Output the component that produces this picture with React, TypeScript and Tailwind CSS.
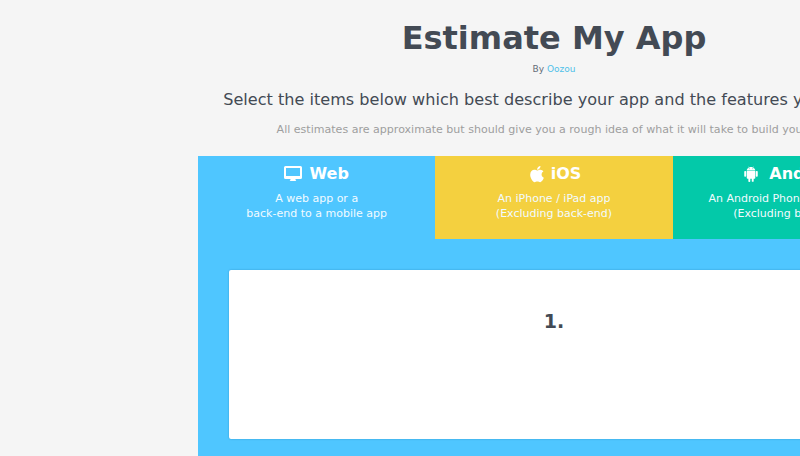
import React from 'react';
import { AiFillAndroid, AiFillApple } from 'react-icons/ai';

const DesktopIcon = () => (
  <svg width="18" height="16" viewBox="0 0 18 16" fill="currentColor">
    <path
      fillRule="evenodd"
      d="M1.5 0h15A1.5 1.5 0 0 1 18 1.500v10a1.500 1.500 0 0 1-1.500 1.500H11.500c0 1 .3 1.400.8 2H5.700c.5-.6.8-1 .8-2H1.500A1.500 1.500 0 0 1 0 11.500v-10A1.500 1.500 0 0 1 1.500 0ZM2 2v8h14V2Z"
    />
  </svg>
);

const tabs = [
  { name: 'Web', icon: <DesktopIcon />, gap: 'gap-[7px]', bg: 'bg-[#4fc6ff]', lines: ['A web app or a', 'back-end to a mobile app'] },
  { name: 'iOS', icon: <AiFillApple size={20} />, gap: 'gap-[4px]', bg: 'bg-[#f4d03f]', lines: ['An iPhone / iPad app', '(Excluding back-end)'] },
  { name: 'Android', icon: <AiFillAndroid size={18} />, gap: 'gap-[9px]', bg: 'bg-[#03c9a9]', lines: ['An Android Phone / Tablet app', '(Excluding back-end)'] },
];

const App: React.FC = () => {
  return (
    <div className="h-[456px] w-[800px] overflow-hidden bg-[#f5f5f5] font-['DejaVu_Sans',sans-serif]">
      <div className="ml-[198px] w-[712px] text-center">
        <h1 className="pt-[17px] text-[32px] leading-[42px] font-bold text-[#434a54]">Estimate My App</h1>
        <p className="mt-[3px] text-[9px] leading-[14px] text-[#656d78]">
          By <span className="text-[#4fc1e9]">Oozou</span>
        </p>
        <p className="mt-[14px] text-[16.1px] leading-[20px] text-[#434a54]">
          Select the items below which best describe your app and the features you require
        </p>
        <p className="mt-[12px] text-[11.05px] leading-[16px] text-[#9e9e9e]">
          All estimates are approximate but should give you a rough idea of what it will take to build your app
        </p>

        <div className="mt-[18px] h-[320px] rounded-t-[2px] bg-[#4fc6ff]">
          <div className="grid h-[83px] grid-cols-3">
            {tabs.map((t) => (
              <div key={t.name} className={`${t.bg} pt-[7px] text-white`}>
                <div className={`flex h-[22px] items-center justify-center ${t.gap} text-[16px] font-bold`}>
                  {t.icon}
                  <span>{t.name}</span>
                </div>
                <div className="mt-[6px] text-[11px] leading-[15px] text-[#f2fbff]">
                  {t.lines.map((l) => (
                    <p key={l}>{l}</p>
                  ))}
                </div>
              </div>
            ))}
          </div>
          <div className="mx-[31px] mt-[31px] h-[169px] rounded-[2px] bg-white pt-[39px] shadow-[0_0_2px_rgba(0,80,130,0.4)]">
            <p className="text-[19px] leading-[24px] font-bold text-[#434a54]">1.</p>
          </div>
        </div>
      </div>
    </div>
  );
};

export default App;
